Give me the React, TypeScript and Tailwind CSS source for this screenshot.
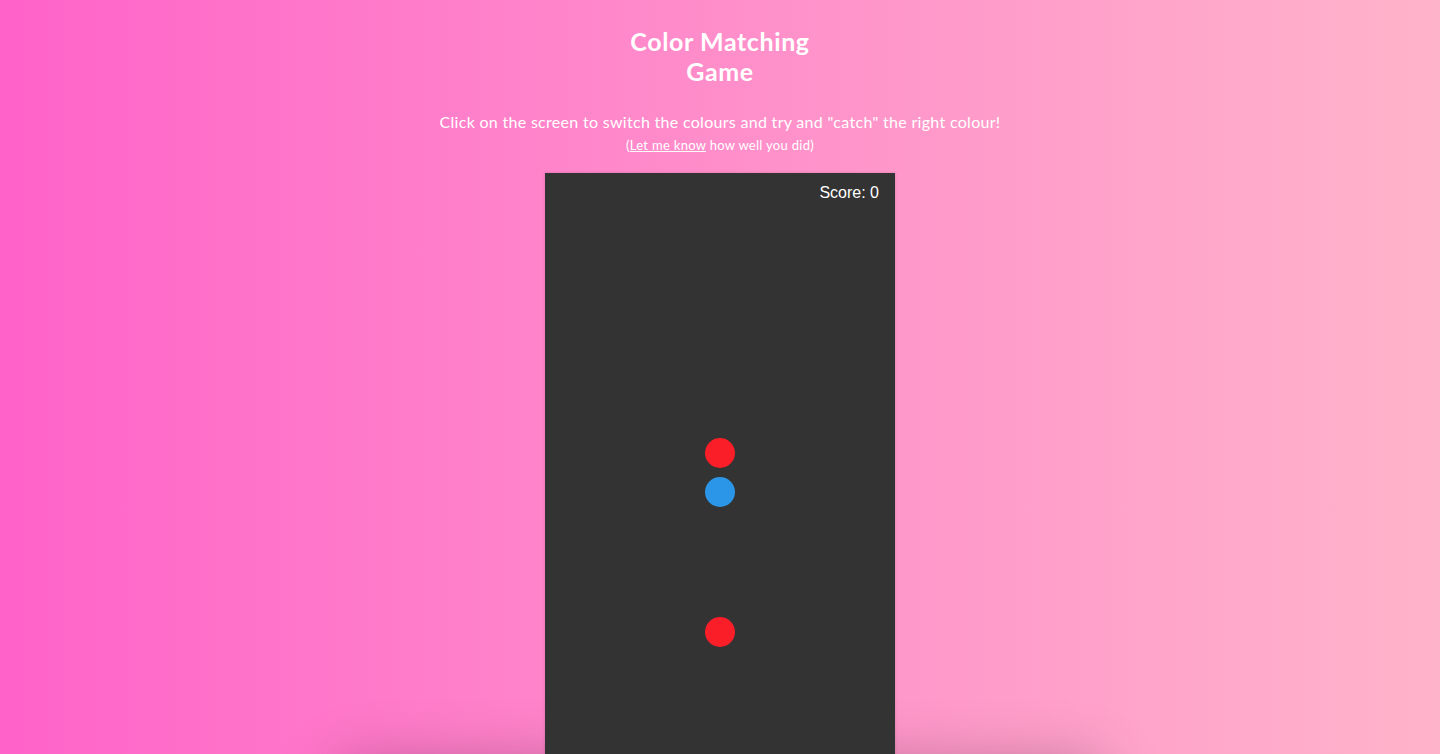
import React from 'react';

const App = () => {
  const balls = [
    { top: 265, color: 'bg-[#f91e28]' },
    { top: 304, color: 'bg-[#2b96e8]' },
    { top: 444, color: 'bg-[#f91e28]' }
  ];

  return (
    <div
      className="h-[754px] overflow-hidden bg-gradient-to-r from-[#ff62c9] to-[#ffb3ca] text-white"
      style={{ fontFamily: 'Lato, "Open Sans", sans-serif' }}
    >
      {/* Header */}
      <div className="pt-[26px] text-center">
        <h1 className="mx-auto w-[240px] text-[25px] leading-[30px] font-bold tracking-[0.6px]">Color Matching Game</h1>
        <p className="mt-[24px] text-[16px] leading-6 tracking-[0.3px]">
          Click on the screen to switch the colours and try and "catch" the right colour!
        </p>
        <p className="mt-[2px] text-[13px] leading-[18px] tracking-[0.3px]">
          (<span className="underline">Let me know</span> how well you did)
        </p>
      </div>

      {/* Game canvas */}
      <div className="relative mx-auto mt-[19px] h-[600px] w-[350px] bg-[#333333] shadow-[0_0_3px_rgba(0,0,0,0.15),0_800px_60px_205px_rgba(0,0,0,0.3)]">
        <div
          className="absolute right-4 top-[11px] text-[16px] leading-[18px]"
          style={{ fontFamily: '"Liberation Sans", Arial, sans-serif' }}
        >
          Score: 0
        </div>
        {balls.map((ball, index) => (
          <div
            key={index}
            className={`absolute left-[160px] h-[30px] w-[30px] rounded-full ${ball.color}`}
            style={{ top: ball.top }}
          />
        ))}
      </div>
    </div>
  );
};

export default App;
